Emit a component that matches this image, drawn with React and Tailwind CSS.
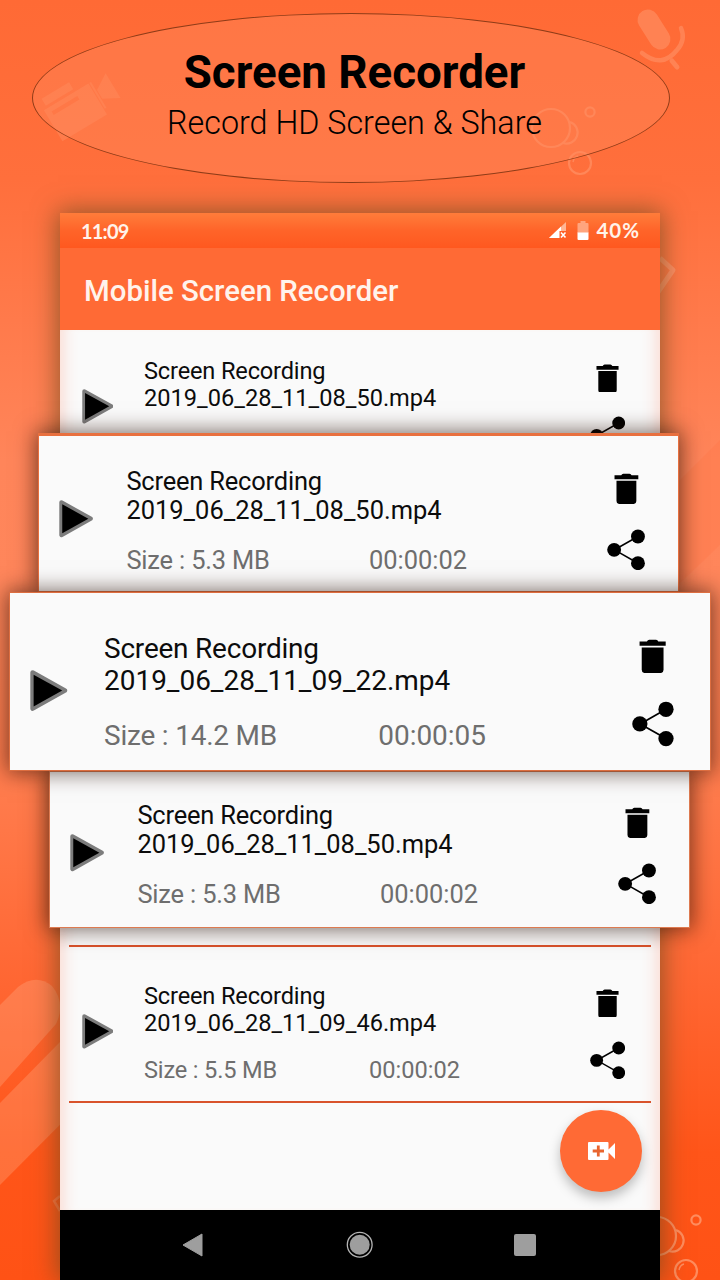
import React from 'react';

const rows = {
  first: { name: '2019_06_28_11_08_50.mp4', size: '5.3 MB', time: '00:00:02' },
  second: { name: '2019_06_28_11_09_22.mp4', size: '14.2 MB', time: '00:00:05' },
  last: { name: '2019_06_28_11_09_46.mp4', size: '5.5 MB', time: '00:00:02' },
};

const PlayIcon = () => (
  <svg viewBox="0 0 32 35" className="mt-[1.33em] h-[1.47em] w-[1.35em] shrink-0">
    <path d="M2.2 2.2 L29.6 17.5 L2.2 32.8 Z" fill="#000" stroke="#7c7c7c" strokeWidth="4" strokeLinejoin="round" />
    <path d="M3 4 L27.4 17.5 L3 31 Z" fill="#000" />
  </svg>
);

const TrashIcon = () => (
  <svg viewBox="0 0 24 30" className="h-[1.22em] w-[0.976em]">
    <path d="M0.5 2.2 H7 Q7.6 0.6 9 0.6 H15 Q16.4 0.6 17 2.2 H23.5 V6 H0.5 Z" />
    <path d="M2.4 7.4 H21.6 V27 Q21.6 30 18.6 30 H5.4 Q2.4 30 2.4 27 Z" />
  </svg>
);

const ShareIcon = () => (
  <svg viewBox="0 0 36 39" className="h-[1.64em] w-[1.51em]">
    <path d="M29 7 L7 19.5 L29 32" fill="none" stroke="#000" strokeWidth="1.5" />
    <circle cx="29" cy="7" r="6.5" />
    <circle cx="6.7" cy="19.5" r="6.5" />
    <circle cx="29" cy="32" r="6.5" />
  </svg>
);

// everything inside is sized in em, so the row follows the font size of its parent
const RecordingRow = ({ item, sizeWidth = 'w-[9.53em]' }) => (
  <div className="flex items-start leading-[1.16em] text-[#0c0c0c]">
    <PlayIcon />
    <div className="ml-[1.3em] w-[18.88em] shrink-0 whitespace-nowrap">
      <p className="tracking-[-0.007em]">Screen Recording</p>
      <p>{item.name}</p>
      <div className="mt-[0.8em] flex text-[#6e6e6e]">
        <span className={`${sizeWidth} tracking-[-0.007em]`}>Size : {item.size}</span>
        <span>{item.time}</span>
      </div>
    </div>
    <div className="mt-[0.24em] flex shrink-0 flex-col items-center gap-[0.98em]">
      <TrashIcon />
      <ShareIcon />
    </div>
  </div>
);

const Bubbles = ({ className }) => (
  <svg viewBox="0 0 82 76" className={className} fill="none" stroke="#ffb48f" strokeWidth="2.2">
    <circle cx="22" cy="26" r="19" />
    <path d="M41 20 A9 9 0 1 1 34 41" />
    <circle cx="61" cy="10" r="4.6" />
    <circle cx="51" cy="61" r="11" />
    <path d="M44 60 Q45 55 49 54" strokeWidth="1.4" />
  </svg>
);

const Backdrop = () => (
  <svg viewBox="0 0 720 1280" className="absolute inset-0 h-full w-full">
    <g fill="#ffc3a0" fillOpacity="0.26">
      <path d="M0 1005 L18 987 Q36 973 52 986 Q66 1003 56 1024 L0 1087 Z" />
      <path d="M0 1103 L180 920 V1004 L0 1185 Z" />
      <path d="M720 440 L600 560 V660 L720 545 Z" fill="#ff5215" fillOpacity="0.09" />
    </g>
    <g transform="rotate(-31 78 105)" fill="#ffb08a" fillOpacity="0.22">
      <path d="M46 92 H98 V128 H46 Z M52 97 V101 H82 V97 Z" fillRule="evenodd" />
      <path d="M50 81 H82 V89 H50 Z" />
      <path d="M99 92 H101 V122 H99 Z" />
      <path d="M102 102 L118 92 V121 L102 112 Z" />
    </g>
    <path d="M660 258 L673 270 L658 292" fill="none" stroke="#ffb491" strokeOpacity="0.4" strokeWidth="5" strokeLinejoin="round" />
    <path d="M60 1196 L54 1201 L60 1211" fill="none" stroke="#ffb491" strokeOpacity="0.3" strokeWidth="2.5" />
    <g fill="none" stroke="#ff9a70" strokeOpacity="0.5" strokeLinecap="round">
      <path d="M648 20 L660 39" strokeWidth="21" />
      <path d="M642 53 Q662 69 677 50 Q686 40 681 28" strokeWidth="4.5" />
      <path d="M672 61 L677 67" strokeWidth="5" />
    </g>
  </svg>
);

const StatusBar = () => (
  <div className="flex h-[35px] items-center bg-linear-to-b from-[#ff7c3a] via-[#ff6429] to-[#ff581f] px-[21px] font-['Lato'] text-[20px] font-bold text-[#fff3ea]">
    <span className="tracking-[-0.8px]">11:09</span>
    <svg viewBox="0 0 18 17" className="ml-auto h-[17px] w-[18px]">
      <path d="M0 16 L17 0 V16 Z" fill="#ffb695" />
      <path d="M0 16 L12 4.5 V16 Z" fill="#fff" />
      <path d="M10.5 9 H18 V17 H10.5 Z" fill="#ff5f25" />
      <path d="M12 10.5 L16.5 15.5 M16.5 10.5 L12 15.5" stroke="#fff" strokeWidth="1.6" />
    </svg>
    <svg viewBox="0 0 12 19" className="ml-[10px] h-[19px] w-[12px]">
      <path d="M1.5 2 H3.5 V0 H8.5 V2 H10.5 Q11.5 2 11.5 3 V12 H0.5 V3 Q0.5 2 1.5 2 Z" fill="#ffa57e" />
      <path d="M0.5 11.5 H11.5 V18 Q11.5 19 10.5 19 H1.5 Q0.5 19 0.5 18 Z" fill="#fff" />
    </svg>
    <span className="-mr-px ml-[7px] text-[20.5px] tracking-[1px]">40%</span>
  </div>
);

const NavBar = () => (
  <div className="flex h-[70px] items-center bg-black">
    <svg viewBox="0 0 22 24" className="ml-[122px] h-[24px] w-[22px]">
      <path d="M1 12 L20 1 V23 Z" fill="#9e9e9e" stroke="#9e9e9e" strokeLinejoin="round" />
    </svg>
    <svg viewBox="0 0 28 28" className="ml-[142px] h-[28px] w-[28px]">
      <circle cx="13.7" cy="13.7" r="12.4" fill="none" stroke="#b5b5b5" strokeWidth="1.3" />
      <circle cx="13.7" cy="13.7" r="10" fill="#9e9e9e" />
    </svg>
    <div className="ml-[140px] h-[22px] w-[22px] rounded-[2px] bg-[#9e9e9e]" />
  </div>
);

const App = () => {
  return (
    <div className="relative h-[1280px] w-[720px] overflow-hidden bg-[linear-gradient(to_bottom,#ff6a35_0%,#ff6f3c_14%,#ff855a_36%,#ff865b_46%,#ff7b4c_62%,#ff6632_77%,#ff5519_90%,#ff5215_100%)] font-['Roboto',sans-serif]">
      <Backdrop />
      <Bubbles className="absolute top-[102px] left-[529px] h-[76px] w-[82px] opacity-35" />
      <Bubbles className="absolute top-[1210px] left-[635px] h-[76px] w-[82px] opacity-60" />

      <header className="relative mt-[13px] ml-[32px] flex h-[170px] w-[638px] flex-col items-center rounded-[50%] border border-[#8f3c18] bg-[#ff8a5c]/40 pt-[31px] pl-[7px] text-black">
        <h1 className="text-[45.7px] leading-[56px] font-bold">Screen Recorder</h1>
        <p className="text-[32.3px] leading-[44px] font-light">Record HD Screen &amp; Share</p>
      </header>

      <main className="relative mt-[30px] ml-[60px] flex h-[1067px] w-[600px] flex-col bg-[#fafafa] shadow-[0_0_24px_2px_rgba(110,75,30,0.75)]">
        <StatusBar />
        <div className="flex h-[82px] items-center bg-[#ff6a35] pt-[5px] pl-[24px] text-[29.4px] font-medium text-[#fff3ec]">
          Mobile Screen Recorder
        </div>
        <div className="relative flex flex-1 flex-col px-[9px] text-[23.6px] shadow-[inset_16px_0_14px_-12px_rgba(255,150,120,0.3),inset_-16px_0_14px_-12px_rgba(255,150,120,0.3)]">
          <div className="h-[615px] pt-[28px] pl-[12.5px]">
            <RecordingRow item={rows.first} />
          </div>
          <div className="h-[158px] border-y-2 border-[#d9532c] pt-[36px] pl-[12.5px]">
            <RecordingRow item={rows.last} />
          </div>
          <button className="absolute right-[18px] bottom-[18px] flex h-[82px] w-[82px] items-center justify-center rounded-full bg-[#ff6a35] shadow-[0_6px_12px_rgba(0,0,0,0.25)]">
            <svg viewBox="0 0 27 18" className="h-[18px] w-[27px]">
              <path d="M0 1 Q0 0 1 0 H19.5 Q20.5 0 20.5 1 V7.5 L27 1 V17 L20.5 10.5 V17 Q20.5 18 19.5 18 H1 Q0 18 0 17 Z" fill="#fff" />
              <path d="M10.3 3.5 V14.5 M4.7 9 H16" stroke="#e8652f" strokeWidth="2.8" />
            </svg>
          </button>
        </div>
        <NavBar />
      </main>

      {/* enlarged rows floating over the phone */}
      <section className="absolute top-[433px] left-[9px] flex w-[702px] flex-col">
        <div className="ml-[29px] h-[159px] w-[641px] border border-t-[3px] border-[#e8703f] bg-[#fafafa] pt-[30.5px] pl-[20px] text-[25.45px] shadow-[0_0_20px_2px_rgba(40,15,5,0.6)]">
          <RecordingRow item={rows.first} />
        </div>
        <div className="relative z-10 h-[179px] border border-[#dd6e40] bg-[#fafafa] pt-[39.5px] pl-[20px] text-[27.95px] shadow-[0_0_20px_2px_rgba(40,15,5,0.6)]">
          <RecordingRow item={rows.second} sizeWidth="w-[9.81em]" />
        </div>
        <div className="ml-[40px] h-[157px] w-[641px] border border-[#dd7a50] bg-[#fafafa] pt-[28.5px] pl-[20px] text-[25.45px] shadow-[0_0_20px_2px_rgba(40,15,5,0.6)]">
          <RecordingRow item={rows.first} />
        </div>
      </section>
    </div>
  );
};

export default App;
